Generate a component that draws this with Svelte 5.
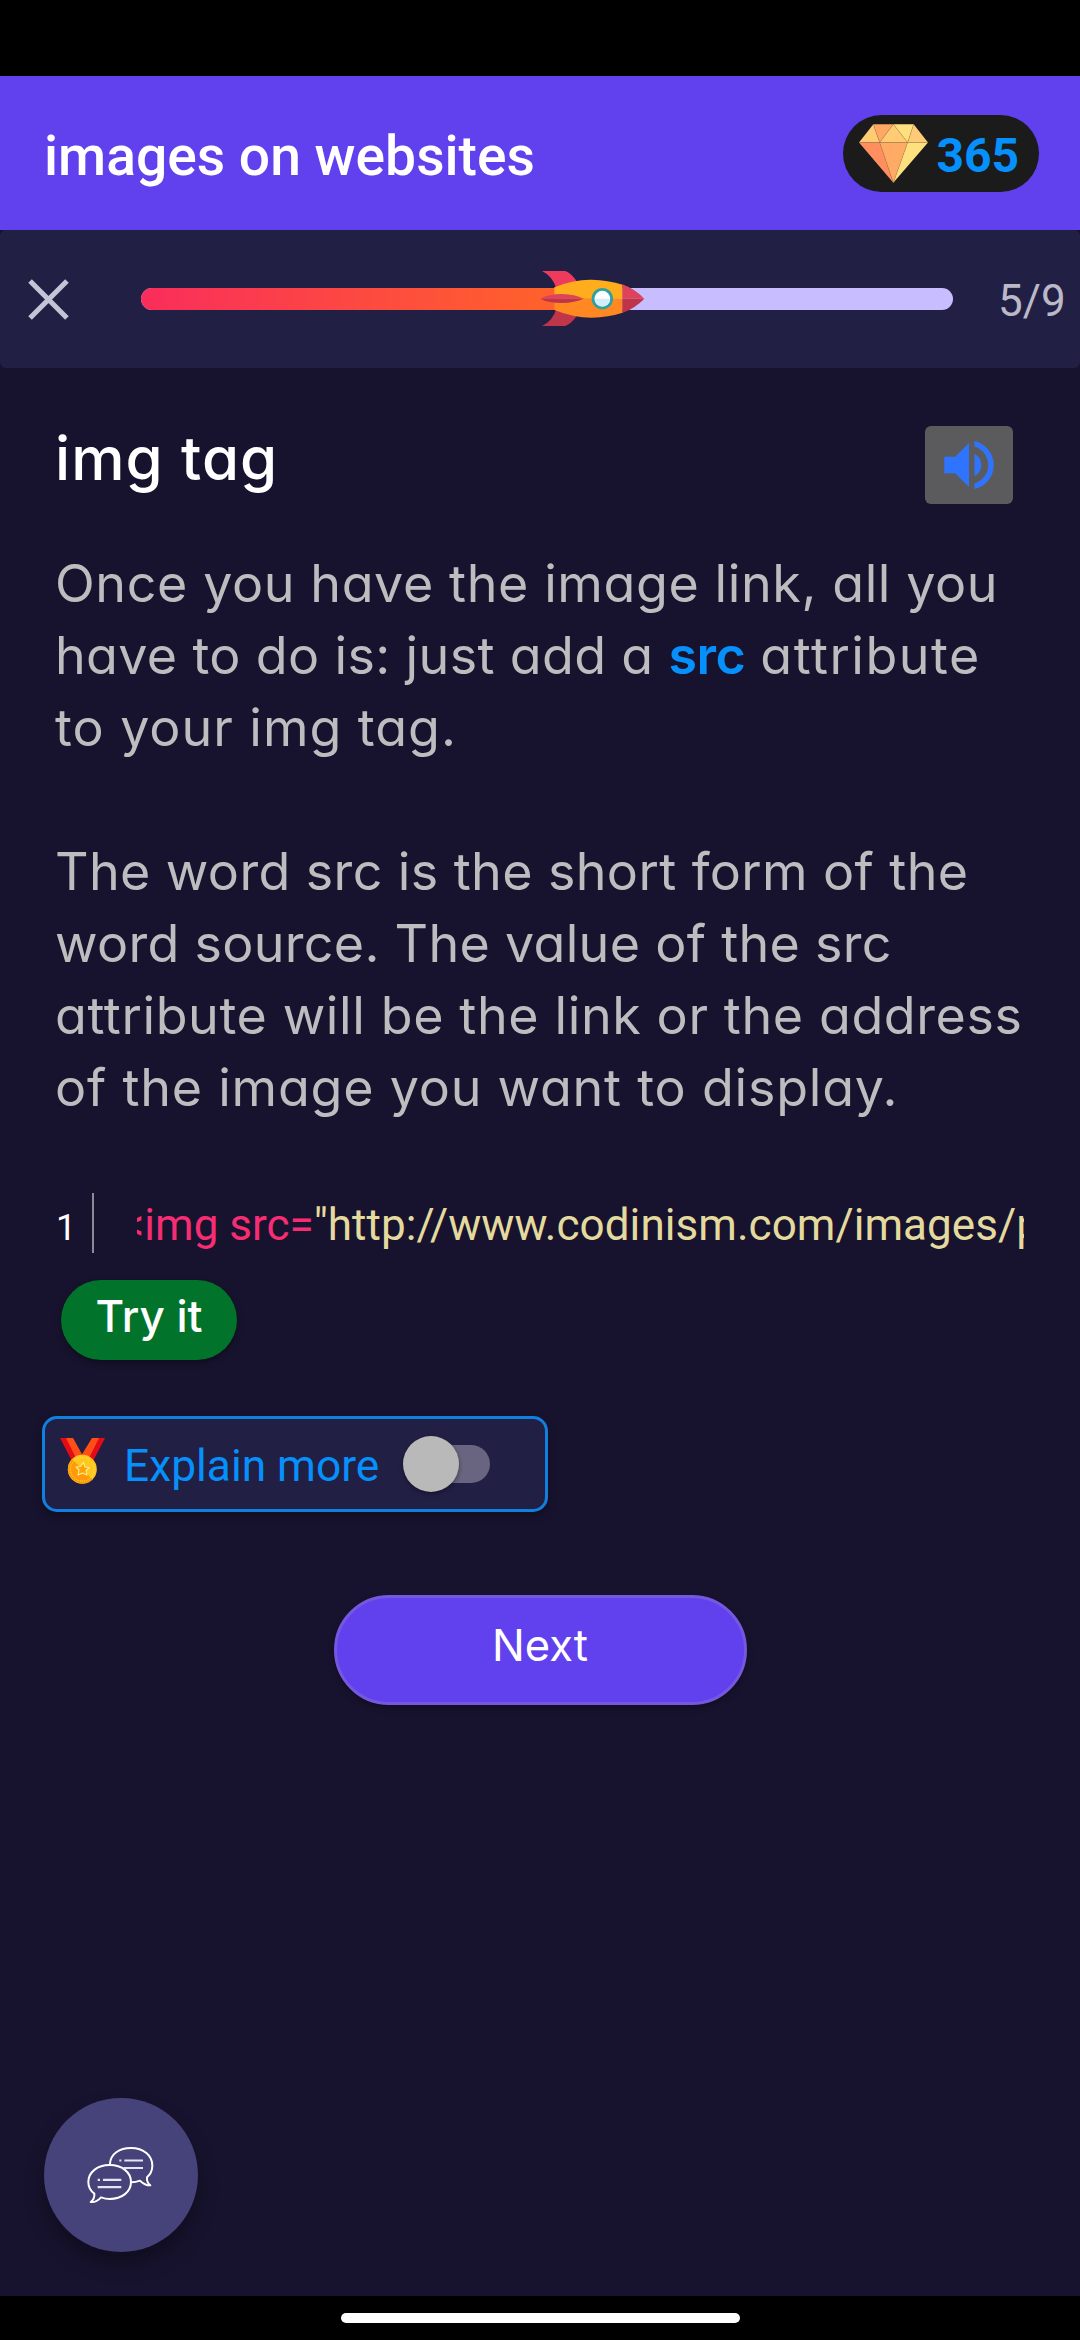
<script>
  const step = 5;
  const total = 9;
  const gems = 365;
  const progress = (step / total) * 100;
  let explain = $state(false);
</script>

<div class="screen">
  <div class="status"></div>

  <header class="topbar">
    <h1>images on websites</h1>
    <div class="gems">
      <svg class="gem" viewBox="117 99 207 176" aria-hidden="true">
        <path d="M160 99L117 154H179Z" fill="#ffcc73" />
        <path d="M160 99H220L179 154Z" fill="#ffa765" />
        <path d="M220 99L179 154H263Z" fill="#ffcc73" />
        <path d="M220 99H281L263 154Z" fill="#ffe07f" />
        <path d="M281 99L324 154H263Z" fill="#ffcb76" />
        <path d="M117 154H179L220 275Z" fill="#ff8f5e" />
        <path d="M179 154H263L220 275Z" fill="#ffab66" />
        <path d="M263 154H324L220 275Z" fill="#ffe07f" />
        <path d="M117 154H324M160 99L179 154L220 275L263 154L281 99M179 154L220 99L263 154" fill="none" stroke="#a97743" stroke-opacity=".55" stroke-width="1.6" />
      </svg>
      <span>{gems}</span>
    </div>
  </header>

  <section class="progress">
    <svg class="close" viewBox="0 0 40 40" aria-hidden="true">
      <path d="M2 2L38 38M38 2L2 38" stroke="#c3c4d6" stroke-width="5" />
    </svg>
    <div class="track">
      <div class="fill" style="width:{progress}%"></div>
      <svg class="rocket" viewBox="60 60 315 171" aria-hidden="true">
        <path d="M66 63H136Q158 72 172 98L110 118Q98 78 66 63Z" fill="#ee3a5c" />
        <path d="M66 228H136Q158 218 172 194L110 174Q98 214 66 228Z" fill="#bf3549" />
        <path d="M103 112Q160 88 215 89Q265 90 308 104V146H103Z" fill="#ffad1c" />
        <path d="M103 180Q160 203 215 203Q265 202 308 188V146H103Z" fill="#ff8822" />
        <path d="M307 103Q345 117 373 146H307Z" fill="#dd445c" />
        <path d="M307 189Q345 175 373 146H307Z" fill="#be3549" />
        <path d="M61 146Q85 132 126 132Q165 133 191 146Z" fill="#dd445c" />
        <path d="M61 146Q85 159 126 159Q165 158 191 146Z" fill="#be3549" />
        <circle cx="247" cy="146" r="32" fill="#2aa1a3" />
        <circle cx="247" cy="146" r="23.5" fill="#fff" />
        <path d="M223.5 146a23.5 23.5 0 0 0 47 0Z" fill="#d2eefb" />
      </svg>
    </div>
    <span class="count">{step}/{total}</span>
  </section>

  <main>
    <div class="heading">
      <h2>img tag</h2>
      <button class="audio" aria-label="Listen">
        <svg viewBox="0 0 24 24" aria-hidden="true">
          <path fill="#2f74ff" d="M3 9v6h4l5 5V4L7 9H3zm13.5 3c0-1.77-1.02-3.29-2.5-4.03v8.05c1.48-.73 2.5-2.25 2.5-4.02zM14 3.23v2.06c2.89.86 5 3.54 5 6.71s-2.11 5.85-5 6.71v2.06c4.01-.91 7-4.49 7-8.77s-2.99-7.86-7-8.77z" />
        </svg>
      </button>
    </div>

    <div class="copy">
      <p>
        <span class="line l1">Once you have the image link, all you</span>
        <span class="line l2">have to do is: just add a <b>src</b> <span class="attr">attribute</span></span>
        <span class="line l3">to your img tag.</span>
      </p>
      <p>
        <span class="line l4">The word src is the short form of the</span>
        <span class="line l5">word source. The value of the src</span>
        <span class="line l6">attribute will be the link or the address</span>
        <span class="line l7">of the image you want to display.</span>
      </p>
    </div>

    <div class="code">
      <span class="gutter">1</span>
      <div class="source">
        <code><span class="tag">&lt;img src=</span><span class="string">"http://www.codinism.com/images/p</span></code>
      </div>
    </div>

    <button class="try">Try it</button>

    <div class="explain">
      <svg class="medal" viewBox="0 0 45 46" aria-hidden="true">
        <path d="M0 0H7L18 19L13 25Z" fill="#e30b17" />
        <path d="M6 0H13L23 18L17 22Z" fill="#ff4f17" />
        <path d="M45 0H38L27 19L32 25Z" fill="#e30b17" />
        <path d="M39 0H32L21 18L28 22Z" fill="#ff4f17" />
        <circle cx="22.3" cy="31.3" r="14.5" fill="#ffc81e" />
        <path d="M12 21A14.5 14.5 0 0 0 32.5 41.5Z" fill="#ff9a08" />
        <circle cx="22.3" cy="31.3" r="11.8" fill="none" stroke="#ffe765" stroke-width="1" stroke-dasharray="1 1.2" />
        <path d="M23.5 24.5L25 29L29.5 29.5L26 32.5L27 37L22.5 35L18 37L19 32L16 29L20.5 28.5Z" fill="#ffa10b" stroke="#fff08a" stroke-width="1.1" stroke-linejoin="round" />
      </svg>
      <span class="label">Explain more</span>
      <button class="switch" class:on={explain} aria-label="Explain more" onclick={() => (explain = !explain)}>
        <span class="thumb"></span>
      </button>
    </div>

    <button class="next">Next</button>

    <button class="chat" aria-label="Chat">
      <svg viewBox="170 195 210 180" fill="none" stroke="#fff" stroke-width="6" stroke-linejoin="round" aria-hidden="true">
        <path d="M242 252C243 222 270 204 305 204C343 204 369 227 369 257C369 271 363 283 353 292C352 302 355 310 363 316C352 317 341 310 332 302C324 305 316 307 307 307" />
        <path d="M241 255C204 255 177 277 177 306C177 321 183 332 195 341C196 351 192 360 184 366C197 368 208 360 215 352C223 355 232 357 241 357C278 357 305 335 305 306C305 277 278 255 241 255Z" />
        <path d="M270 241.500H276M285 241.500H341M282 264H341M205 299.500H212M221 299.500H276M205 321.500H276" stroke="#e6e4f4" stroke-width="6.500" />
      </svg>
    </button>
  </main>

  <footer><div class="pill"></div></footer>
</div>

<style>
  :global(body) { background: #000; }
  h1, h2, p { margin: 0; }
  button { border: 0; padding: 0; font: inherit; color: inherit; }
  svg { display: block; }
  .screen {
    width: 1080px;
    height: 2340px;
    display: flex;
    flex-direction: column;
    overflow: hidden;
    background: #17132e;
    font-family: Roboto, sans-serif;
  }
  .status { height: 76px; flex: none; background: #000; }
  .topbar {
    height: 154px;
    flex: none;
    box-sizing: border-box;
    display: flex;
    align-items: center;
    justify-content: space-between;
    padding: 0 41px 0 44px;
    background: #6140ee;
  }
  h1 { font-size: 55.200px; font-weight: 500; line-height: 66px; padding-top: 6px; color: #fff; white-space: nowrap; }
  .gems {
    width: 196px;
    height: 77px;
    box-sizing: border-box;
    padding-left: 16px;
    display: flex;
    align-items: center;
    gap: 8.500px;
    border-radius: 39px;
    background: #1b1b1b;
    color: #0690fb;
    font-size: 48px;
    font-weight: 700;
  }
  .gems span { padding-top: 4px; }
  .gem { width: 69px; height: 59px; }

  .progress {
    height: 138px;
    flex: none;
    box-sizing: border-box;
    display: flex;
    align-items: center;
    padding-left: 28px;
    border-radius: 6px;
    background: #221f45;
  }
  .close { width: 41px; height: 41px; margin-right: 72px; }
  .track { position: relative; width: 812px; height: 22px; border-radius: 11px; background: #c8beff; }
  .fill { height: 100%; border-radius: 11px 0 0 11px; background: linear-gradient(90deg, #fa2d5b, #ff6726); }
  .rocket { position: absolute; left: 399px; top: -18px; width: 105px; height: 57px; }
  .count { margin-left: 45px; padding-top: 4px; font-size: 44px; color: #bbb9c8; }

  main { flex: 1; display: flex; flex-direction: column; align-items: flex-start; }
  .heading { width: 1080px; box-sizing: border-box; display: flex; justify-content: space-between; align-items: flex-start; padding: 58px 67px 0 55px; }
  h2, .copy, .try, .next { font-family: Inter, sans-serif; font-feature-settings: "cv11"; }
  h2 { font-size: 60px; font-weight: 500; line-height: 64px; letter-spacing: 1.100px; color: #fff; }
  .audio { width: 88px; height: 78px; border-radius: 6px; background: #5b5b5d; display: grid; place-items: center; }
  .audio svg { width: 66px; height: 66px; }

  .copy { margin-top: 44px; padding-left: 55px; display: flex; flex-direction: column; gap: 72px; font-size: 52px; line-height: 72px; color: #bdbcbf; }
  .line { display: block; white-space: nowrap; }
  .l1 { letter-spacing: 0.600px; }
  .l2 { letter-spacing: 0.350px; }
  .l3 { letter-spacing: 0.960px; }
  .l4 { letter-spacing: 0.390px; }
  .l5 { letter-spacing: 0.300px; }
  .l6 { letter-spacing: 0.610px; }
  .l7 { letter-spacing: 0.780px; }
  .copy b { font-weight: 600; letter-spacing: -0.500px; color: #0690fb; }
  .attr { letter-spacing: 1.500px; }

  .code { margin-top: 69px; height: 60px; display: flex; align-items: stretch; }
  .gutter { width: 94px; box-sizing: border-box; border-right: 2px solid #8b8a97; padding: 5px 0 0 56px; font-size: 36px; line-height: 60px; color: #fff; }
  .source { margin-left: 43px; width: 887px; overflow: hidden; white-space: nowrap; }
  code { display: block; margin-left: -15px; padding-top: 2px; font-family: Roboto, sans-serif; font-size: 44px; line-height: 60px; }
  .tag { color: #f72d74; }
  .string { color: #e5da9e; letter-spacing: 0.060px; }

  .try {
    margin: 27px 0 0 61px;
    width: 176px;
    height: 80px;
    padding-bottom: 8px;
    border-radius: 40px;
    background: #02732a;
    box-shadow: 0 3px 6px rgba(0, 0, 0, .35);
    color: #fff;
    font-size: 44px;
    font-weight: 500;
  }

  .explain {
    margin: 56px 0 0 42px;
    width: 506px;
    height: 96px;
    box-sizing: border-box;
    display: flex;
    align-items: center;
    padding-left: 15px;
    border: 3px solid #1080e0;
    border-radius: 15px;
    background: #221f45;
    box-shadow: 0 4px 8px rgba(0, 0, 0, .3);
  }
  .medal { width: 45px; height: 46px; margin-bottom: 6px; }
  .label { margin-left: 19px; padding-top: 4px; width: 287px; font-size: 44.300px; color: #0690fb; white-space: nowrap; }
  .switch { width: 79px; height: 38px; border-radius: 19px; background: #69647f; display: flex; align-items: center; }
  .thumb { flex: none; width: 56px; height: 56px; margin-left: -8px; border-radius: 50%; background: #b9b9b9; box-shadow: 0 2px 4px rgba(0, 0, 0, .4); }
  .on { justify-content: flex-end; }

  .next {
    align-self: center;
    margin-top: 83px;
    width: 413px;
    height: 110px;
    padding-bottom: 10px;
    border: 3px solid #7657e0;
    border-radius: 55px;
    background: #6140ee;
    box-shadow: 0 3px 6px rgba(0, 0, 0, .3);
    color: #fff;
    font-size: 43.500px;
  }

  .chat {
    margin: auto 0 44px 44px;
    width: 154px;
    height: 154px;
    border-radius: 50%;
    background: #46427a;
    box-shadow: 0 12px 20px rgba(0, 0, 0, .3);
    display: grid;
    place-items: center;
  }
  .chat svg { width: 70px; height: 60px; }

  footer { height: 44px; flex: none; box-sizing: border-box; padding-top: 17px; background: #000; }
  .pill { width: 399px; height: 10px; margin: 0 auto; border-radius: 5px; background: #fff; }
</style>
